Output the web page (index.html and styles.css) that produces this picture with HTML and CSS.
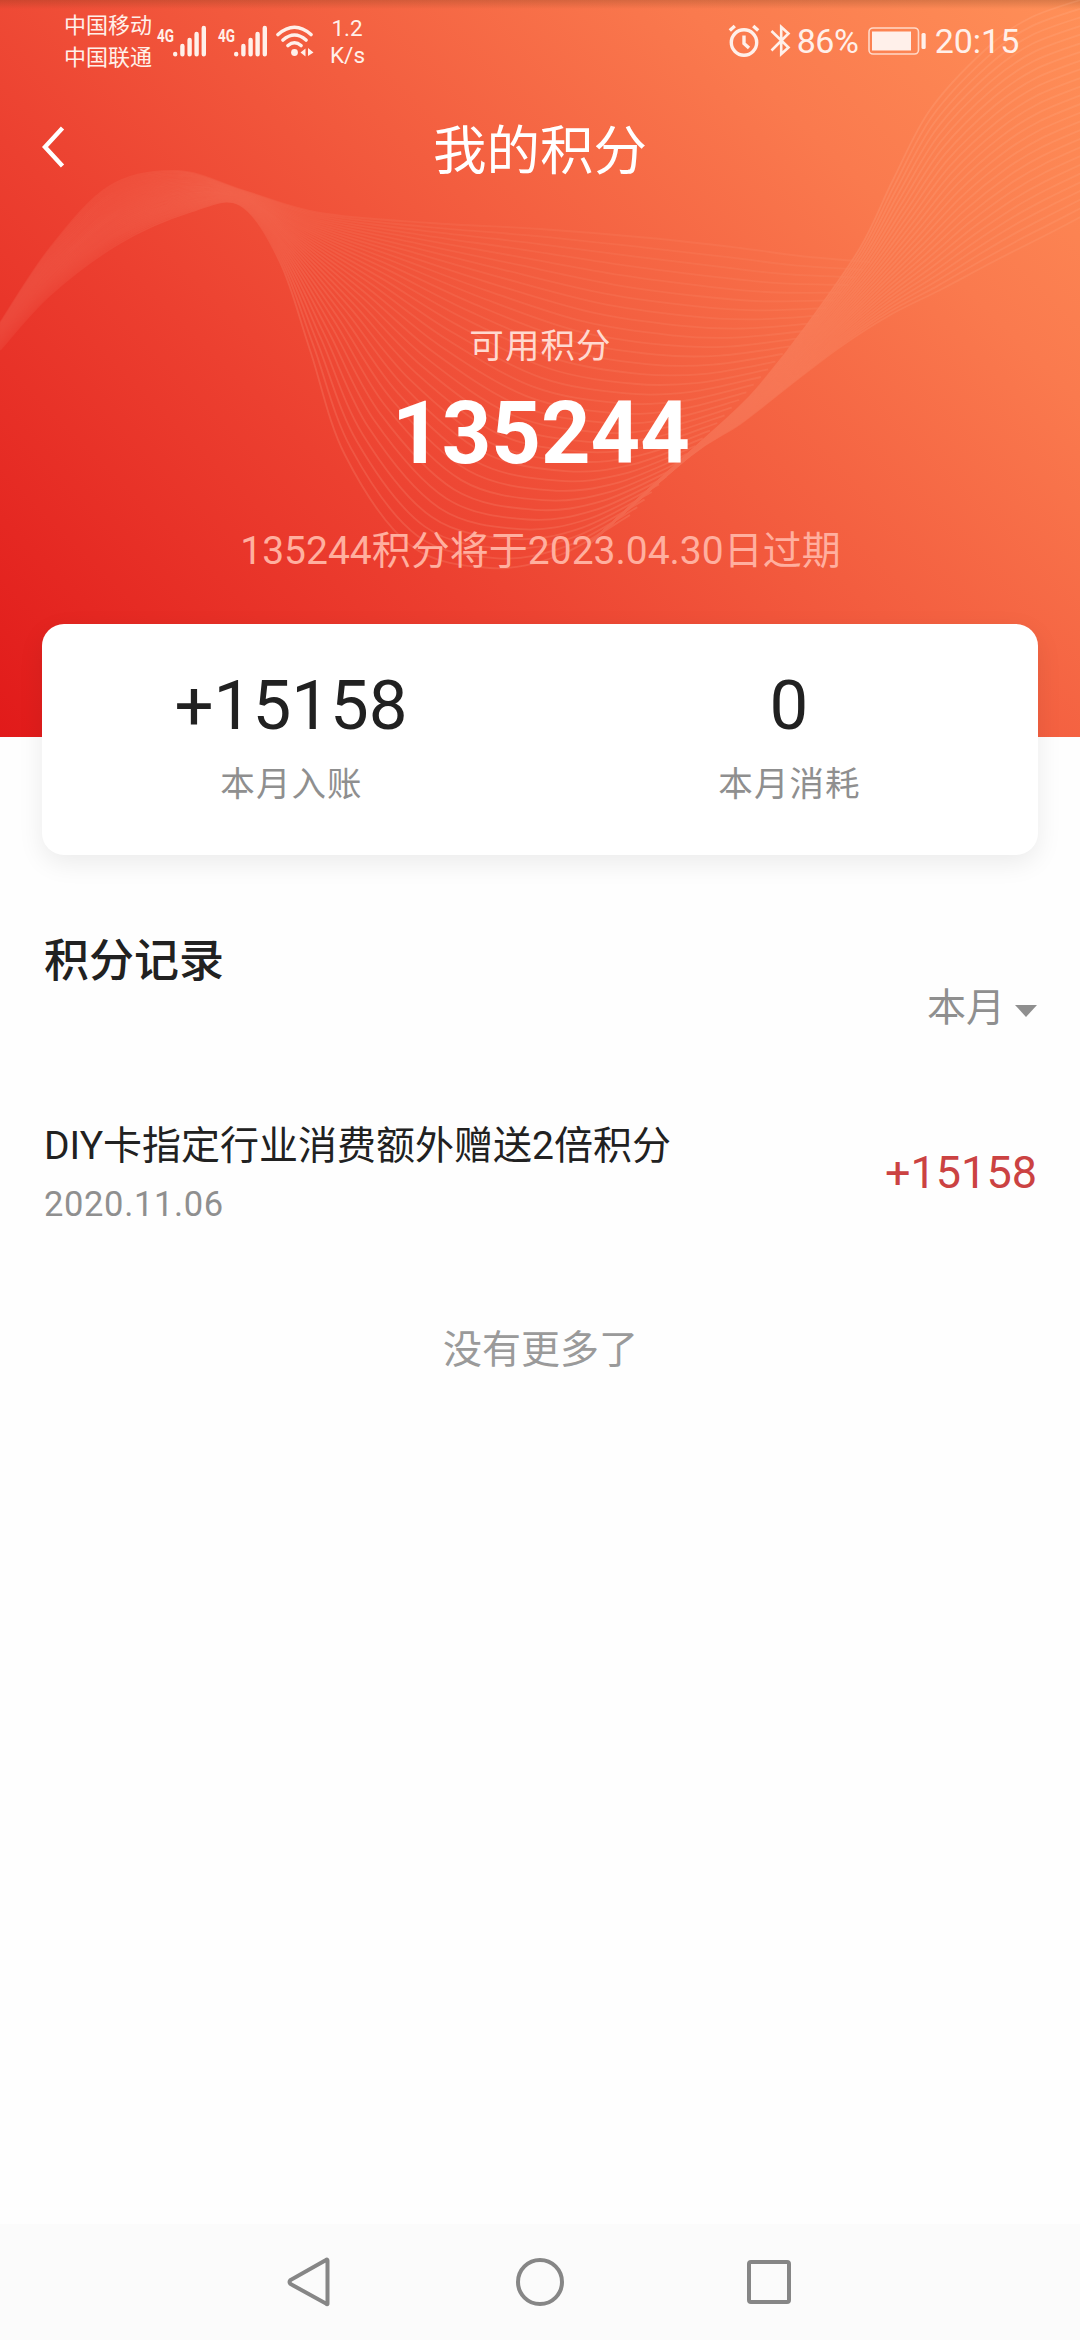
FILE: index.html
```
<!DOCTYPE html>
<html lang="zh-CN">
<head>
<meta charset="utf-8">
<title>我的积分</title>
<link rel="stylesheet" href="styles.css">
</head>
<body>
<header class="hero">
  <svg class="waves" viewBox="0 0 1080 737" aria-hidden="true">
    <defs>
      <filter id="soft" x="-20%" y="-40%" width="140%" height="180%"><feGaussianBlur stdDeviation="13"/></filter>
      <mask id="fade" maskUnits="userSpaceOnUse" x="0" y="0" width="1080" height="737">
        <rect width="1080" height="737" fill="#fff"/>
        <path d="M-40 410L0 362L50 306L120 254L190 230L232 222L256 244L262 330L0 480L-40 480z" fill="#000" stroke="#000" stroke-width="22" filter="url(#soft)"/>
      </mask>
    </defs>
    <g class="lines" mask="url(#fade)"></g>
  </svg>
  <div class="status">
    <div class="carriers"><span>中国移动</span><span>中国联通</span></div>
    <svg class="signal" viewBox="0 0 52 34">
      <text class="net" x="1" y="18" textLength="17" lengthAdjust="spacingAndGlyphs">4G</text>
      <path class="bars" d="M19.2 30v.2M26.400 22v8.200M33.600 16v14.200M40.600 10v20.200M47.800 4v26.200"/>
    </svg>
    <svg class="signal second" viewBox="0 0 52 34">
      <text class="net" x="1" y="18" textLength="17" lengthAdjust="spacingAndGlyphs">4G</text>
      <path class="bars" d="M19.2 30v.2M26.400 22v8.200M33.600 16v14.200M40.600 10v20.200M47.800 4v26.200"/>
    </svg>
    <svg class="wifi" viewBox="0 0 38 34">
      <path class="arc" d="M2 10.500Q18.500-4 35 10.500M7 16Q18.500 6 30 16M12 21.500Q18.500 16 25 21.500"/>
      <circle class="solid" cx="18.500" cy="28.500" r="3.400"/>
      <path class="solid" d="M24.500 28.500l5-4v8zM37.500 28.500l-5.500-4.500v8z"/>
    </svg>
    <div class="speed"><span>1.2</span><span>K/s</span></div>
    <svg class="alarm" viewBox="0 0 32 34">
      <circle class="line" cx="16" cy="18.500" r="12.700"/>
      <path class="line" d="M16 11.500v8l5 4.500M1.800 6.500l5-4.500M30.200 6.500l-5-4.500"/>
    </svg>
    <svg class="bt" viewBox="0 0 22 34">
      <path class="thin" d="M1.500 7l17 16.500-7.300 6.500V3l7.300 6.500L1.500 26.500"/>
    </svg>
    <span class="pct">86%</span>
    <svg class="battery" viewBox="0 0 58 34">
      <rect class="case" x="1" y="4" width="49.500" height="26" rx="4"/>
      <rect class="solid" x="4" y="7.500" width="39" height="19"/>
      <rect class="solid" x="53.500" y="9" width="4.200" height="16" rx="1.500"/>
    </svg>
    <span class="time">20:15</span>
  </div>
  <div class="titlebar">
    <svg class="back" viewBox="0 0 24 42"><path d="M20.500 2L3 21l17.500 19"/></svg>
    <h1>我的积分</h1>
  </div>
  <p class="caption">可用积分</p>
  <p class="total">135244</p>
  <p class="expiry">135244积分将于2023.04.30日过期</p>
</header>
<main>
  <section class="card">
    <div class="stat"><strong>+15158</strong><span>本月入账</span></div>
    <div class="stat"><strong>0</strong><span>本月消耗</span></div>
  </section>
  <section class="records">
    <h2>积分记录</h2>
    <div class="filter"><span>本月</span><svg viewBox="0 0 22 12"><path d="M0 0h22L11 12z"/></svg></div>
    <div class="record">
      <div>
        <p class="name">DIY卡指定行业消费额外赠送2倍积分</p>
        <p class="date">2020.11.06</p>
      </div>
      <span class="amount">+15158</span>
    </div>
    <p class="end">没有更多了</p>
  </section>
</main>
<nav class="navbar">
  <svg viewBox="0 0 50 50"><path d="M41.500 3.500v43Q41.500 48 40 46.500L4.500 27Q2.500 25 4.500 23L40 3Q41.500 2 41.500 3.500z"/></svg>
  <svg viewBox="0 0 50 50"><circle cx="25" cy="25" r="22"/></svg>
  <svg viewBox="0 0 50 50"><rect x="5" y="5" width="40" height="40" rx="2"/></svg>
</nav>
<script src="waves.js"></script>
</body>
</html>
```
FILE: styles.css
```
* { box-sizing: border-box; margin: 0; padding: 0; }
body {
  width: 1080px;
  height: 2340px;
  display: flex;
  flex-direction: column;
  background: #fefefe;
  color: #212121;
  font-family: Roboto, "Noto Sans CJK SC", sans-serif;
  overflow: hidden;
}
svg { display: block; flex: none; }

.hero {
  position: relative;
  height: 737px;
  flex: none;
  color: #fff;
  text-align: center;
  background:
    linear-gradient(rgba(90, 50, 20, .22), rgba(90, 50, 20, 0) 9px),
    linear-gradient(45deg, #e11a1a 0%, #ec4030 33%, #f2593d 52%, #fa7a4e 78%, #ff9058 100%);
}
.waves { position: absolute; left: 0; top: 0; width: 1080px; height: 737px; }
.lines { fill: none; stroke: #ffc4a8; stroke-width: 1.800px; opacity: .18; }
.status, .titlebar, .caption, .total, .expiry { position: relative; }

.status {
  height: 80px;
  padding: 1px 60px 0 64px;
  display: flex;
  align-items: center;
  color: #fff0ea;
}
.carriers { width: 92px; display: flex; flex-direction: column; font-size: 22px; line-height: 32px; text-align: left; white-space: nowrap; padding-top: 2px; }
.signal { width: 52px; height: 34px; overflow: visible; }
.second { margin-left: 9px; }
.net { font-size: 18px; font-weight: 700; fill: #fff0ea; }
.bars { fill: none; stroke: #fff0ea; stroke-width: 4.400px; stroke-linecap: round; }
.wifi { width: 38px; height: 34px; margin-left: 7px; }
.arc { fill: none; stroke: #fff0ea; stroke-width: 3.600px; stroke-linecap: round; }
.solid { fill: #fff0ea; }
.line { fill: none; stroke: #fff0ea; stroke-width: 3.400px; }
.thin { fill: none; stroke: #fff0ea; stroke-width: 2.600px; }
.case { fill: none; stroke: #ffd9c8; stroke-width: 1.600px; }
.speed { margin-left: 16px; padding-top: 3px; display: flex; flex-direction: column; width: 34px; font-size: 22.500px; line-height: 27px; }
.alarm { width: 32px; height: 34px; margin-left: auto; }
.bt { width: 22px; height: 34px; margin-left: 10px; }
.pct { margin-left: 3px; width: 65px; font-size: 34px; line-height: 40px; letter-spacing: -.5px; }
.battery { width: 58px; height: 34px; margin-left: 8px; }
.time { margin-left: 8px; width: 86px; font-size: 34px; line-height: 40px; }

.titlebar { height: 140px; padding: 0 42px; display: flex; align-items: center; }
.back { width: 24px; height: 42px; margin-bottom: 6px; }
.back path { fill: none; stroke: #fff; stroke-width: 4.400px; }
h1 { flex: 1; margin: 4px 24px 0 0; font-size: 53.500px; font-weight: 400; line-height: 60px; }
.caption { margin-top: 96px; font-size: 34.500px; line-height: 60px; letter-spacing: 1.100px; padding-left: 1px; color: #ffd9d0; }
.total { margin-top: 8px; font-size: 86.500px; line-height: 100px; font-weight: 700; padding-left: 2px; }
.expiry { margin-top: 37px; font-size: 39px; line-height: 60px; color: #ffaf9f; padding-left: 1px; }

main { flex: 1; }
.card {
  position: relative;
  height: 231px;
  margin: -113px 42px 0;
  display: flex;
  border-radius: 22px;
  background: #fff;
  box-shadow: 0 8px 26px rgba(0, 0, 0, .08);
}
.stat { flex: 1; display: flex; flex-direction: column; align-items: center; padding-top: 42px; }
.stat strong { font-size: 69px; line-height: 80px; font-weight: 400; }
.stat span { margin-top: 18px; font-size: 34.500px; line-height: 40px; letter-spacing: 1.100px; padding-left: 1px; color: #8f8f8f; }

.records { padding: 0 43px 0 44px; }
h2 { margin-top: 77px; font-size: 45px; line-height: 60px; font-weight: 500; }
.filter { margin-top: -14px; display: flex; justify-content: flex-end; align-items: center; gap: 10px; color: #8f8f8f; font-size: 39px; line-height: 60px; }
.filter svg { width: 22px; height: 12px; margin-top: 6px; fill: #8f8f8f; }
.record { margin-top: 78px; display: flex; justify-content: space-between; align-items: center; }
.name { font-size: 39px; line-height: 60px; }
.date { font-size: 34.500px; line-height: 56px; letter-spacing: .65px; color: #8f8f8f; }
.amount { font-size: 45px; line-height: 60px; color: #cb4242; margin-bottom: 2px; }
.end { margin-top: 88px; text-align: center; font-size: 39px; line-height: 60px; color: #9a9a9a; }

.navbar { height: 116px; flex: none; display: flex; justify-content: center; gap: 179px; align-items: center; background: #fbfbfb; }
.navbar svg { width: 50px; height: 50px; fill: none; stroke: #868686; stroke-width: 4px; }
```
FILE: waves.js
```
// Draws the header's ribbon: two families of curves, each blended between its two edge curves.
const ribbon = {
  count: 34,
  from: [[0,350],[50,295],[120,243],[190,212],[240,205],[280,262],[310,350],[345,455],[410,545],[490,568],[560,555],[630,515]],
  to: [[0,323],[50,248],[110,186],[178,171],[245,191],[320,213],[430,223],[540,229],[650,238],[740,248],[800,256],[870,262]],
  opacity: t => 0.85 - 0.45 * t
};
const fan = {
  count: 26,
  from: [[590,543],[690,452],[733,413],[760,385],[807,325],[860,248],[893,180],[930,110],[985,50],[1030,18],[1090,-3]],
  to: [[590,543],[690,456],[740,424],[790,385],[840,347],[890,315],[940,290],[985,266],[1020,248],[1050,233],[1090,212]],
  opacity: t => 0.85 - 0.2 * t
};

function smooth(points) {
  let d = `M${points[0]}`;
  for (let i = 0; i < points.length - 1; i++) {
    const a = points[i - 1] || points[i];
    const b = points[i];
    const c = points[i + 1];
    const e = points[i + 2] || c;
    const p = [b[0] + (c[0] - a[0]) / 6, b[1] + (c[1] - a[1]) / 6];
    const q = [c[0] - (e[0] - b[0]) / 6, c[1] - (e[1] - b[1]) / 6];
    d += `C${p} ${q} ${c}`;
  }
  return d;
}

const lines = document.querySelector('.lines');
for (const family of [ribbon, fan]) {
  for (let i = 0; i < family.count; i++) {
    const t = i / (family.count - 1);
    const points = family.from.map((p, k) => [
      p[0] + (family.to[k][0] - p[0]) * t,
      p[1] + (family.to[k][1] - p[1]) * t
    ]);
    const path = document.createElementNS('http://www.w3.org/2000/svg', 'path');
    path.setAttribute('d', smooth(points));
    path.setAttribute('stroke-opacity', family.opacity(t));
    lines.append(path);
  }
}
```
